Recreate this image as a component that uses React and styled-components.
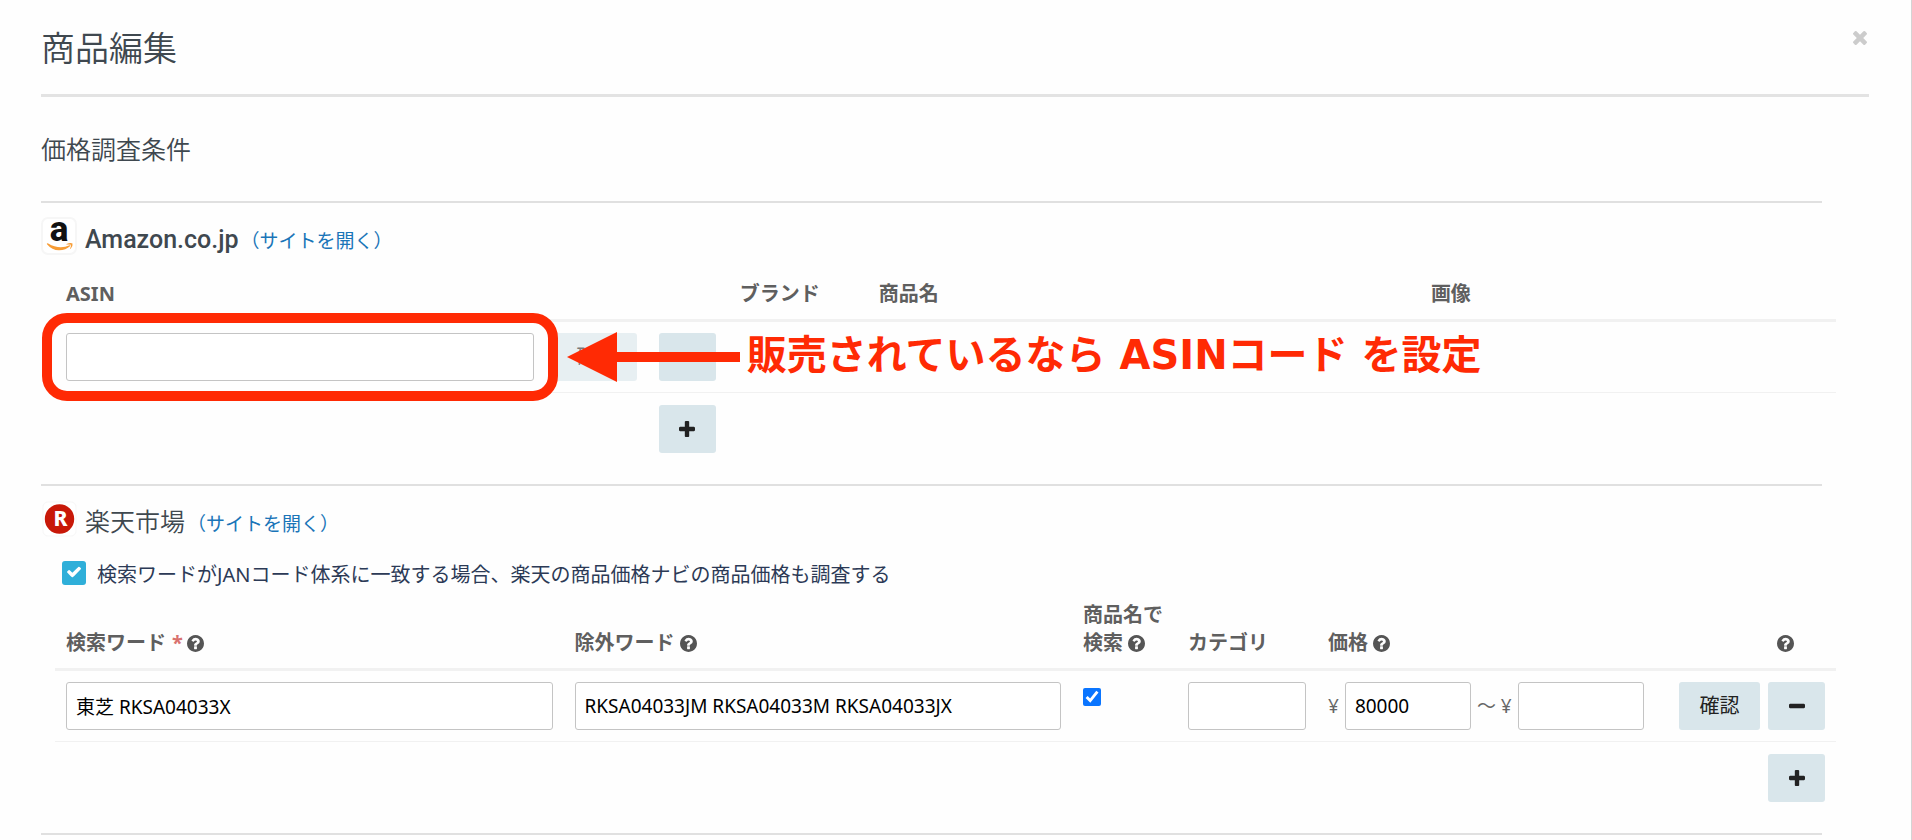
import React from 'react'
import styled, { createGlobalStyle, css } from 'styled-components'

const GlobalStyle = createGlobalStyle`
    * {
        box-sizing: border-box;
    }

    body {
        margin: 0;
        background-color: #fefefe;
        color: #3f484f;
        font-family: "Noto Sans", "Noto Sans CJK JP", sans-serif;
        font-size: 20px;
        line-height: 28px;
    }
`

const Modal = styled.main`
    min-height: 100vh;
    padding: 0 42px 0 41px;
    border-right: 1px solid #d4d4d4;
`

const ModalHeader = styled.header`
    display: flex;
    justify-content: space-between;
    align-items: flex-start;
    padding: 24px 0 20px;
    border-bottom: 3px solid #e3e3e3;

    h1 {
        margin: 0;
        font-family: Roboto, "Noto Sans CJK JP", sans-serif;
        font-size: 34px;
        font-weight: 350;
        line-height: 50px;
    }
`

const CloseButton = styled.button`
    display: flex;
    margin-top: 7px;
    padding: 0 2px;
    border: none;
    background-color: transparent;
    color: #ccc;
    cursor: pointer;
`

const Body = styled.div`
    margin-right: 47px;
`

const SubTitle = styled.h2`
    margin: 36px 0 32px;
    font-family: Roboto, "Noto Sans CJK JP", sans-serif;
    font-size: 25px;
    font-weight: 350;
    line-height: 36px;
`

const Section = styled.section`
    padding: 14px 0 20px;
    border-top: 2px solid #e0e0e0;
`

const ShopHeading = styled.div`
    display: flex;
    align-items: center;
    gap: 8px;
    height: 38px;
`

const ShopName = styled.div`
    display: flex;
    align-items: baseline;
    gap: 2px;
    padding-top: 7px;

    h3 {
        margin: 0;
        font-family: Roboto, "Noto Sans CJK JP", sans-serif;
        font-size: 25px;
        font-weight: ${props => props.$medium ? 500 : 350};
        line-height: 34px;
    }

    a {
        color: #1a75b8;
        font-size: 19px;
        text-decoration: none;
    }
`

const CheckLabel = styled.label`
    display: flex;
    align-items: center;
    gap: 11px;
    height: 24px;
    margin: 23px 0 5px 21px;
    color: #2c3a56;
    font-size: 20px;
`

const CheckText = styled.span`
    padding-top: 4px;
`

const CheckBox = styled.span`
    position: relative;
    width: 24px;
    height: 24px;

    input {
        appearance: none;
        display: block;
        width: 24px;
        height: 24px;
        margin: 0;
        border-radius: 3px;
        background-color: #2fafd9;
    }

    svg {
        position: absolute;
        top: 4px;
        left: 5px;
        pointer-events: none;
    }
`

const Table = styled.table`
    width: 100%;
    table-layout: fixed;
    border-spacing: 0;

    th {
        padding: 11px;
        border-bottom: 3px solid #f1f1f1;
        color: #5f5f5f;
        font-weight: 700;
        text-align: left;
        vertical-align: bottom;
        white-space: nowrap;
    }

    th svg {
        vertical-align: -2px;
    }

    td {
        padding: 11px;
        border-bottom: 1px solid #f1f1f1;
        color: #666;
        vertical-align: top;
    }

    tfoot td {
        padding-top: 12px;
        border-bottom: none;
    }
`

const TableWrap = styled.div`
    margin: ${props => props.$spaced ? '14px' : '0'} -14px 0 14px;
`

const Col = styled.col`
    width: ${props => props.$width || 'auto'};
`

const HelpHead = styled.th`
    && {
        padding-right: 42px;
        text-align: right;
    }
`

const Required = styled.span`
    margin: 0 4px 0 6px;
    color: #d9716f;
`

const TextInput = styled.input`
    display: block;
    width: 100%;
    min-width: 0;
    height: 48px;
    padding: 0 9px;
    border: 1px solid #c4c4c4;
    border-radius: 3px;
    background-color: #fff;
    color: #000;
    font: inherit;
    font-size: 19px;
`

const NameCheck = styled.input`
    display: block;
    width: 18px;
    height: 18px;
    margin: 6px 0 0;
    accent-color: #0a75ff;
`

const Price = styled.div`
    display: flex;
    align-items: center;
    gap: 6px;
    font-size: 19px;
    white-space: nowrap;

    input {
        width: 126px;
    }
`

const Actions = styled.div`
    display: flex;
    justify-content: flex-end;
    gap: 8px;
`

const Button = styled.button`
    display: flex;
    align-items: center;
    justify-content: center;
    width: 57px;
    height: 48px;
    padding: 0;
    border: none;
    border-radius: 3px;
    background-color: #d9e6eb;
    color: #222;
    font: inherit;

    ${props => props.$wide && css`
        width: 81px;
    `}

    &:disabled {
        opacity: .6;
    }
`

const Marked = styled.div`
    position: relative;
`

// red frame drawn round the field
const Frame = styled.div`
    position: absolute;
    inset: -20px -24px;
    border: 10px solid #ff2a04;
    border-radius: 25px;
    pointer-events: none;
    z-index: 1;
`

const Callout = styled.div`
    position: absolute;
    top: -1px;
    left: calc(100% + 33px);
    display: flex;
    align-items: center;
    gap: 7px;
    height: 50px;
    color: #ff2a04;
    font-family: "DejaVu Sans", "Noto Sans CJK JP", sans-serif;
    font-size: 40px;
    font-weight: 700;
    line-height: 50px;
    white-space: nowrap;
    pointer-events: none;
    z-index: 1;

    svg {
        flex: none;
    }

    span {
        padding-bottom: 4px;
    }
`

const Logo = styled.svg`
    flex: none;
    overflow: visible;
`

const AmazonLogo = () => (
    <Logo width="36" height="38" viewBox="0 0 36 38" aria-hidden="true">
        <rect x="1" y="1" width="34" height="36" rx="6" fill="#fff" stroke="#f6f6f6" strokeWidth="2"/>
        <text x="18" y="24" textAnchor="middle" fontFamily="Roboto" fontWeight="800" fontSize="35" fill="#111">a</text>
        <path d="M6 26.500q.5-.5 1.200 0q11 6.500 21.500 1.800q1.200-.2.600.8q-4.500 4.200-11.300 4.200q-7 0-12-6q-.3-.5 0-.8z" fill="#f79c34"/>
        <path d="M25.500 27q4-1.800 6-.6q.6 2.600-1.800 5.400q-.8.400-.5-.5q1.200-2.600.8-3.500q-1.200-.6-4-.2q-1.200 0-.5-.6z" fill="#f79c34"/>
    </Logo>
)

const RakutenLogo = () => (
    <Logo width="36" height="38" viewBox="0 0 36 38" aria-hidden="true">
        <rect x="2" y="2" width="33" height="34" rx="5" fill="#fff" stroke="#f7f7f7" strokeWidth="1"/>
        <circle cx="18.500" cy="19" r="14.700" fill="#c81808"/>
        <text x="19.500" y="26" textAnchor="middle" fontFamily="Noto Sans" fontWeight="800" fontSize="21" fill="#fff">R</text>
    </Logo>
)

const Help = () => (
    <svg width="17" height="17" viewBox="0 0 1536 1536" fill="#555" role="img" aria-label="ヘルプ">
        <path fillRule="evenodd" d="M896 1248v-192q0-14-9-23t-23-9h-192q-14 0-23 9t-9 23v192q0 14 9 23t23 9h192q14 0 23-9t9-23zM1152 576q0-88-55.500-163t-138.500-116t-170-41q-243 0-371 213q-15 24 8 42l132 100q7 6 19 6q16 0 25-12q53-68 86-92q34-24 86-24q48 0 85.500 26t37.500 59q0 38-20 61t-68 45q-63 28-115.500 86.500t-52.500 125.500v36q0 14 9 23t23 9h192q14 0 23-9t9-23q0-19 21.500-49.500t54.500-49.500q32-18 49-28.500t46-35t44.500-48t28-60.500t12.500-81zM1536 768q0 209-103 385.500t-279.500 279.500t-385.500 103t-385.500-103t-279.500-279.500t-103-385.500t103-385.500t279.500-279.500t385.500-103t385.500 103t279.500 279.500t103 385.500z"/>
    </svg>
)

const Plus = () => (
    <svg width="16" height="16" viewBox="0 128 1408 1408" fill="currentColor">
        <path d="M1408 736v192q0 40-28 68t-68 28h-416v416q0 40-28 68t-68 28h-192q-40 0-68-28t-28-68v-416h-416q-40 0-68-28t-28-68v-192q0-40 28-68t68-28h416v-416q0-40 28-68t68-28h192q40 0 68 28t28 68v416h416q40 0 68 28t28 68z"/>
    </svg>
)

const Minus = () => (
    <svg width="16" height="16" viewBox="0 128 1408 1408" fill="currentColor">
        <path d="M1408 736v192q0 40-28 68t-68 28h-1216q-40 0-68-28t-28-68v-192q0-40 28-68t68-28h1216q40 0 68 28t28 68z"/>
    </svg>
)

const Times = () => (
    <svg width="14" height="14" viewBox="110 258 1188 1188" fill="currentColor">
        <path d="M1298 1214q0 40-28 68l-136 136q-28 28-68 28t-68-28l-294-294-294 294q-28 28-68 28t-68-28l-136-136q-28-28-28-68t28-68l294-294-294-294q-28-28-28-68t28-68l136-136q28-28 68-28t68 28l294 294 294-294q28-28 68-28t68 28l136 136q28 28 28 68t-28 68l-294 294 294 294q28 28 28 68z"/>
    </svg>
)

const Check = () => (
    <svg width="14" height="14" viewBox="121 153 1550 1550" fill="#fff">
        <path d="M1671 566q0 40-28 68l-724 724-136 136q-28 28-68 28t-68-28l-136-136-362-362q-28-28-28-68t28-68l136-136q28-28 68-28t68 28l294 295 656-657q28-28 68-28t68 28l136 136q28 28 28 68z"/>
    </svg>
)

const Arrow = () => (
    <svg width="173" height="50" viewBox="0 0 173 50" fill="currentColor">
        <path d="M0 25L50 0v20h123v10H50v20z"/>
    </svg>
)

const AmazonSection = () => (
    <Section>
        <ShopHeading>
            <AmazonLogo/>
            <ShopName $medium>
                <h3>Amazon.co.jp</h3>
                <a href="#amazon">（サイトを開く）</a>
            </ShopName>
        </ShopHeading>
        <TableWrap $spaced>
            <Table>
                <colgroup>
                    <Col $width="27.5%"/>
                    <Col $width="103px"/>
                    <Col $width="81px"/>
                    <Col $width="139px"/>
                    <Col $width="31%"/>
                    <Col/>
                </colgroup>
                <thead>
                    <tr>
                        <th id="asin">ASIN</th>
                        <th/>
                        <th/>
                        <th>ブランド</th>
                        <th>商品名</th>
                        <th>画像</th>
                    </tr>
                </thead>
                <tbody>
                    <tr>
                        <td>
                            <Marked>
                                <TextInput type="text" aria-labelledby="asin"/>
                                <Frame/>
                                <Callout><Arrow/><span>販売されているなら ASINコード を設定</span></Callout>
                            </Marked>
                        </td>
                        <td><Button $wide disabled>確認</Button></td>
                        <td><Button aria-label="削除"><Minus/></Button></td>
                        <td/>
                        <td/>
                        <td/>
                    </tr>
                </tbody>
                <tfoot>
                    <tr>
                        <td colSpan="2"/>
                        <td><Button aria-label="追加"><Plus/></Button></td>
                        <td colSpan="3"/>
                    </tr>
                </tfoot>
            </Table>
        </TableWrap>
    </Section>
)

const RakutenSection = () => {

    const [ navi, setNavi ] = React.useState(true)

    return (
        <Section>
            <ShopHeading>
                <RakutenLogo/>
                <ShopName>
                    <h3>楽天市場</h3>
                    <a href="#rakuten">（サイトを開く）</a>
                </ShopName>
            </ShopHeading>
            <CheckLabel>
                <CheckBox>
                    <input type="checkbox" checked={navi} onChange={() => setNavi(!navi)}/>
                    {navi && <Check/>}
                </CheckBox>
                <CheckText>検索ワードがJANコード体系に一致する場合、楽天の商品価格ナビの商品価格も調査する</CheckText>
            </CheckLabel>
            <TableWrap>
                <Table>
                    <colgroup>
                        <Col/>
                        <Col/>
                        <Col $width="105px"/>
                        <Col $width="140px"/>
                        <Col $width="350px"/>
                        <Col $width="169px"/>
                    </colgroup>
                    <thead>
                        <tr>
                            <th id="word">検索ワード<Required>*</Required><Help/></th>
                            <th id="exclude">除外ワード <Help/></th>
                            <th id="by-name">商品名で<br/>検索 <Help/></th>
                            <th id="category">カテゴリ</th>
                            <th id="price">価格 <Help/></th>
                            <HelpHead><Help/></HelpHead>
                        </tr>
                    </thead>
                    <tbody>
                        <tr>
                            <td><TextInput type="text" aria-labelledby="word" defaultValue="東芝 RKSA04033X"/></td>
                            <td><TextInput type="text" aria-labelledby="exclude" defaultValue="RKSA04033JM RKSA04033M RKSA04033JX"/></td>
                            <td><NameCheck type="checkbox" aria-labelledby="by-name" defaultChecked/></td>
                            <td><TextInput type="text" aria-labelledby="category"/></td>
                            <td>
                                <Price>
                                    ¥<TextInput type="text" aria-labelledby="price" defaultValue="80000"/>
                                    <span>～ ¥</span><TextInput type="text" aria-labelledby="price"/>
                                </Price>
                            </td>
                            <td>
                                <Actions>
                                    <Button $wide>確認</Button>
                                    <Button aria-label="削除"><Minus/></Button>
                                </Actions>
                            </td>
                        </tr>
                    </tbody>
                    <tfoot>
                        <tr>
                            <td colSpan="5"/>
                            <td><Actions><Button aria-label="追加"><Plus/></Button></Actions></td>
                        </tr>
                    </tfoot>
                </Table>
            </TableWrap>
        </Section>
    )
}

const App = () => {
    return (
        <Modal>
            <GlobalStyle/>
            <ModalHeader>
                <h1>商品編集</h1>
                <CloseButton aria-label="閉じる"><Times/></CloseButton>
            </ModalHeader>
            <Body>
                <SubTitle>価格調査条件</SubTitle>
                <AmazonSection/>
                <RakutenSection/>
                <Section/>
            </Body>
        </Modal>
    )
}

export default App
